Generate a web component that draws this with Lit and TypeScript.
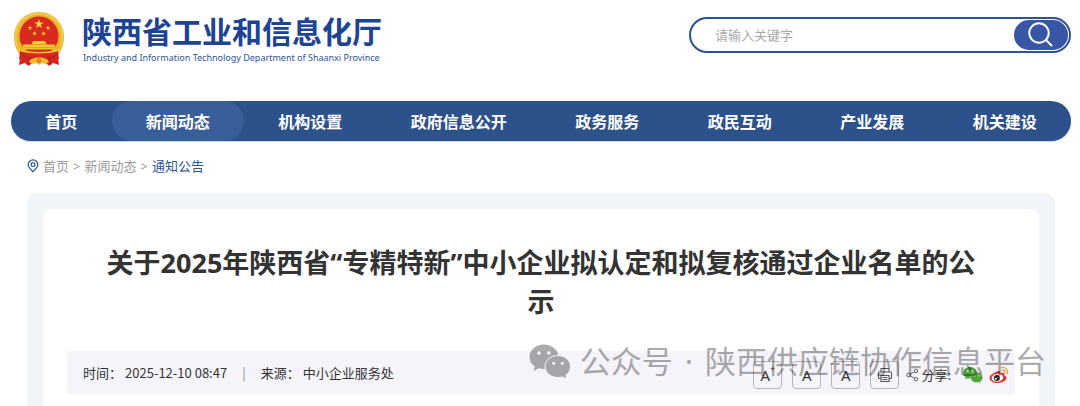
import { LitElement, html, css, svg } from "lit";
import { customElement, state } from "lit/decorators.js";
import { classMap } from "lit/directives/class-map.js";

const NAV = ["首页", "新闻动态", "机构设置", "政府信息公开", "政务服务", "政民互动", "产业发展", "机关建设"];

const star = (cx: number, cy: number, r: number) => {
  const pts = Array.from({ length: 10 }, (_, i) => {
    const a = (Math.PI / 5) * i - Math.PI / 2;
    const d = i % 2 ? r * 0.4 : r;
    return `${(cx + d * Math.cos(a)).toFixed(2)},${(cy + d * Math.sin(a)).toFixed(2)}`;
  }).join(" ");
  return svg`<polygon points=${pts} fill="#fbd83a"/>`;
};

const emblem = html`<svg class="emblem" viewBox="0 0 52 56" aria-hidden="true">
  <path d="M8 40 6 54l6-2 4 3 4-4h12l4 4 4-3 6 2-2-14z" fill="#d4251f"/>
  <path d="M26 1C12 1 1 12 1 26c0 8 3 15 8 20l8 3h18l8-3c5-5 8-12 8-20C51 12 40 1 26 1z" fill="#e9b62b"/>
  <path d="M26 2.500C13 2.500 2.500 13 2.500 26c0 7 3 13 7 18" fill="none" stroke="#f3ce50" stroke-width="1.500"/>
  <path d="M26 2.500C39 2.500 49.500 13 49.500 26c0 7-3 13-7 18" fill="none" stroke="#f3ce50" stroke-width="1.500"/>
  <circle cx="26" cy="25" r="19.500" fill="#d92a20"/>
  ${star(26, 13, 5)}${star(17, 17, 2.4)}${star(35, 17, 2.4)}${star(21.5, 22.5, 2.4)}${star(30.5, 22.5, 2.4)}
  <path d="M20 30h12l1.500 3.500H42v5H10v-5h8.500z" fill="#f5c931"/>
  <path d="M19 33.500h14M10 36.700h32" stroke="#d98a20" stroke-width=".7"/>
  <path d="M7 40c11 3.500 27 3.500 38 0l1 8c-4 1-7 2-9 4-3-3-19-3-22 0-2-2-5-3-9-4z" fill="#d4251f"/>
  <path d="M8 39.500c12 3 24 3 36 0" stroke="#f1c534" stroke-width="1.500" fill="none"/>
  <path d="M16 51c1-6 19-6 20 0l-4 2-3-1-3 2-3-2-3 1z" fill="#f0bf2d"/>
  <circle cx="26" cy="49.500" r="2.500" fill="#d98a20"/>
  <path d="M8 43c3 3 7 4 9 4l-3 7M44 43c-3 3-7 4-9 4l3 7" stroke="#a81a18" stroke-width=".8" fill="none"/>
</svg>`;

const wechat = (cls: string, fill: string, eye: string, gap: string) => html`<svg class=${cls} viewBox="0 0 42 35" aria-hidden="true">
  <path d="M15 .500C7 .500.500 6 .500 13c0 3.800 2 7 5.400 9.300L4.500 27l5.300-2.800c1.600.5 3.400.8 5.200.8 8 0 14.500-5.300 14.500-12S23 .500 15 .500z" fill=${fill}/>
  <path d="M29 11.500c-7.200 0-13 4.800-13 11S21.800 33.500 29 33.500c1.500 0 3-.2 4.300-.6L38 35l-1.200-3.900c2.900-2 4.700-5 4.700-8.300 0-6.400-5.300-11.300-12.500-11.300z" fill=${fill} stroke=${gap}/>
  <circle cx="10" cy="9" r="1.800" fill=${eye}/><circle cx="19.800" cy="9" r="1.800" fill=${eye}/>
  <circle cx="24.800" cy="19.300" r="1.500" fill=${eye}/><circle cx="33.400" cy="19.300" r="1.500" fill=${eye}/>
</svg>`;

const weibo = html`<svg class="social" viewBox="0 0 20 18" aria-hidden="true">
  <path d="M8 5.500c1.600-.8 3-.6 3.200.4.100.5 0 .9-.1 1.300 2-.8 4-.7 4.200.8.100.4 0 .8-.2 1.200 1.400.5 2.400 1.300 2.400 2.600 0 2.700-4 5.200-8.700 5.200S.500 14.900.500 12 4.800 7 8 5.500z" fill="#e0342c"/>
  <ellipse cx="8.400" cy="11.800" rx="5.800" ry="3.900" fill="#fff" transform="rotate(-7 8.400 11.800)"/>
  <circle cx="7.900" cy="12" r="2.900" fill="#1a1a1a"/><circle cx="6.900" cy="12.700" r="1" fill="#fff"/><circle cx="8.800" cy="11.200" r=".5" fill="#fff"/>
  <path d="M12.800 1.500c3.700-.6 6.500 2.300 5.600 6M13.200 4.200c1.800-.3 3.100 1 2.700 2.900" fill="none" stroke="#f3a43a" stroke-width="1.400" stroke-linecap="round"/>
</svg>`;

@customElement("app-root")
export class AppRoot extends LitElement {
  @state() private active = 1;

  static styles = css`
    :host {
      display: flex;
      flex-direction: column;
      min-height: 100vh;
      background: #fff;
      color: #333;
      font-family: "Noto Sans", "Noto Sans CJK SC", sans-serif;
      font-size: 13px;
      line-height: 20px;
    }
    * { box-sizing: border-box; }
    a { color: inherit; text-decoration: none; }
    button { font: inherit; color: inherit; padding: 0; cursor: pointer; }
    .header {
      display: flex;
      justify-content: space-between;
      align-items: flex-start;
      padding: 11px 9px 0 13px;
    }
    .brand { display: flex; gap: 17px; color: #1c4394; }
    .emblem { width: 52px; height: 56px; }
    .name {
      margin: 0;
      font: bold 30px/38px "Noto Sans CJK SC", sans-serif;
    }
    .english {
      margin: 0;
      padding: 2px 0 0 1px;
      color: #2f539e;
      font-size: 9px;
      line-height: 14px;
    }
    .search {
      display: flex;
      align-items: center;
      width: 37%;
      max-width: 382px;
      height: 36px;
      margin-top: 6px;
      padding: 0 1px 0 24px;
      border: 2px solid #2d528c;
      border-radius: 18px;
    }
    .search input {
      flex: 1;
      min-width: 0;
      padding: 0;
      border: 0;
      outline: 0;
      background: none;
      color: #333;
      font: 13px/20px "Noto Sans CJK SC", sans-serif;
    }
    .search input::placeholder { color: #a9a9a9; opacity: 1; }
    .go {
      display: grid;
      place-items: center;
      width: 54px;
      height: 30px;
      border: 0;
      border-radius: 15px;
      background: #3756a5;
    }
    .go svg { width: 26px; height: 26px; }
    .nav {
      display: flex;
      margin: 34px 9px 0 11px;
      border-radius: 20px;
      background: #2d518b;
      box-shadow: 0 1px 0 #c6d3e6;
      overflow: hidden;
    }
    .nav a {
      flex: 1 1 auto;
      padding: 0 33px;
      border-radius: 20px;
      color: #fff;
      font: bold 16px/40px "Noto Sans CJK SC", sans-serif;
      text-align: center;
      white-space: nowrap;
    }
    .nav .on { background: #395f9b; }
    .crumbs {
      display: flex;
      align-items: center;
      gap: 4px;
      padding: 15px 27px 0;
      color: #999;
    }
    .pin { width: 12px; height: 14px; }
    .crumbs .here { color: #2d5694; }
    .panel {
      display: flex;
      flex: 1;
      margin: 17px 25px 0 27px;
      padding: 16px 16px 0;
      border-radius: 10px 10px 0 0;
      background: #f1f5f9;
    }
    .article {
      flex: 1;
      min-width: 0;
      padding: 34px 24px 12px;
      border-radius: 8px 8px 0 0;
      background: #fff;
    }
    .title {
      margin: 0 0 30px;
      padding: 0 30px;
      font-size: 27px;
      line-height: 39px;
      text-align: center;
    }
    .meta {
      position: relative;
      display: flex;
      align-items: center;
      height: 43px;
      padding: 0 6px 0 16px;
      border-radius: 4px;
      background: #f5f4fa;
      font-family: "Noto Sans CJK SC", sans-serif;
      white-space: nowrap;
    }
    .field { display: flex; gap: 3px; }
    .bar { margin: 0 15px; color: #888; }
    .tools { display: flex; align-items: center; gap: 10px; margin: 4px 0 0 auto; }
    .tool {
      display: flex;
      align-items: center;
      justify-content: center;
      width: 29px;
      height: 28px;
      border: 1px solid #b4b4b8;
      border-radius: 4px;
      background: none;
      font: 15px/20px "Noto Sans", sans-serif;
    }
    .tool sup { align-self: flex-start; font-size: 9px; line-height: 14px; }
    .tool svg { width: 16px; height: 16px; }
    .share { display: flex; align-items: center; gap: 2px; margin: 0 2px 0 -3px; }
    .share svg { width: 13px; height: 14px; }
    .link { display: flex; }
    .social { width: 20px; height: 18px; }
    .link + .link { margin-left: -4px; }
    .watermark {
      position: absolute;
      right: -31px;
      top: -12px;
      display: flex;
      align-items: center;
      gap: 9px;
      color: #000;
      opacity: 0.32;
      pointer-events: none;
      font: 31px/44px "Noto Sans", "Noto Sans CJK SC", sans-serif;
    }
    .words { display: flex; gap: 12px; }
    .mark { width: 42px; height: 35px; }
  `;

  render() {
    return html`
      <header class="header">
        <div class="brand">
          ${emblem}
          <div>
            <h1 class="name">陕西省工业和信息化厅</h1>
            <p class="english">Industry and Information Technology Department of Shaanxi Province</p>
          </div>
        </div>
        <form class="search" @submit=${(e: Event) => e.preventDefault()}>
          <input type="text" aria-label="请输入关键字" placeholder="请输入关键字" />
          <button class="go" aria-label="搜索">
            <svg viewBox="0 0 26 26" fill="none" stroke="#fff" stroke-width="2">
              <circle cx="11" cy="11" r="9.700" /><path d="m18 18 6 6" />
            </svg>
          </button>
        </form>
      </header>
      <nav class="nav">
        ${NAV.map((t, i) => html`<a href="#" class=${classMap({ on: i === this.active })}
          @click=${(e: Event) => { e.preventDefault(); this.active = i; }}>${t}</a>`)}
      </nav>
      <nav class="crumbs">
        <svg class="pin" viewBox="0 0 11 14" fill="none" stroke="#2d5694" stroke-width="1.200" aria-hidden="true">
          <path d="M5.500 12.700C3 10.500.7 8.200.7 5.600a4.800 4.800 0 0 1 9.600 0c0 2.600-2.300 4.900-4.800 7.100z" /><circle cx="5.500" cy="5.600" r="1.900" />
        </svg>
        <a href="#">首页</a><span>&gt;</span><a href="#">新闻动态</a><span>&gt;</span><a href="#" class="here">通知公告</a>
      </nav>
      <main class="panel">
        <article class="article">
          <h2 class="title">关于2025年陕西省“专精特新”中小企业拟认定和拟复核通过企业名单的公示</h2>
          <div class="meta">
            <span class="field"><span>时间：</span><time>2025-12-10 08:47</time></span>
            <span class="bar">|</span>
            <span class="field"><span>来源：</span><span>中小企业服务处</span></span>
            <div class="tools">
              <button class="tool" aria-label="放大字号">A<sup>+</sup></button>
              <button class="tool" aria-label="默认字号">A</button>
              <button class="tool" aria-label="缩小字号">A</button>
              <button class="tool" aria-label="打印">
                <svg viewBox="0 0 16 16" fill="none" stroke="#555" stroke-width="1.100">
                  <path d="M4 5V1.500h8V5M4 11.500H2.500a1 1 0 0 1-1-1V6a1 1 0 0 1 1-1h11a1 1 0 0 1 1 1v4.500a1 1 0 0 1-1 1H12M4 8.500h8v6H4zM5.500 10.500h5M5.500 12.500h5" />
                </svg>
              </button>
              <span class="share">
                <svg viewBox="0 0 14 14" fill="none" stroke="#555" aria-hidden="true">
                  <circle cx="2.800" cy="7" r="2" /><circle cx="10.800" cy="2.700" r="1.800" /><circle cx="10.800" cy="11.500" r="1.800" /><path d="m4.600 6 4.600-2.500M4.600 8l4.600 2.700" />
                </svg>
                分享:
              </span>
              <a class="link" href="#" aria-label="微信">${wechat("social", "#4fa53a", "#fff", "#f5f4fa")}</a>
              <a class="link" href="#" aria-label="微博">${weibo}</a>
            </div>
            <div class="watermark">
              ${wechat("mark", "#000", "#fff", "#fff")}
              <span class="words"><span>公众号</span><span>·</span><span>陕西供应链协作信息平台</span></span>
            </div>
          </div>
        </article>
      </main>
    `;
  }
}
